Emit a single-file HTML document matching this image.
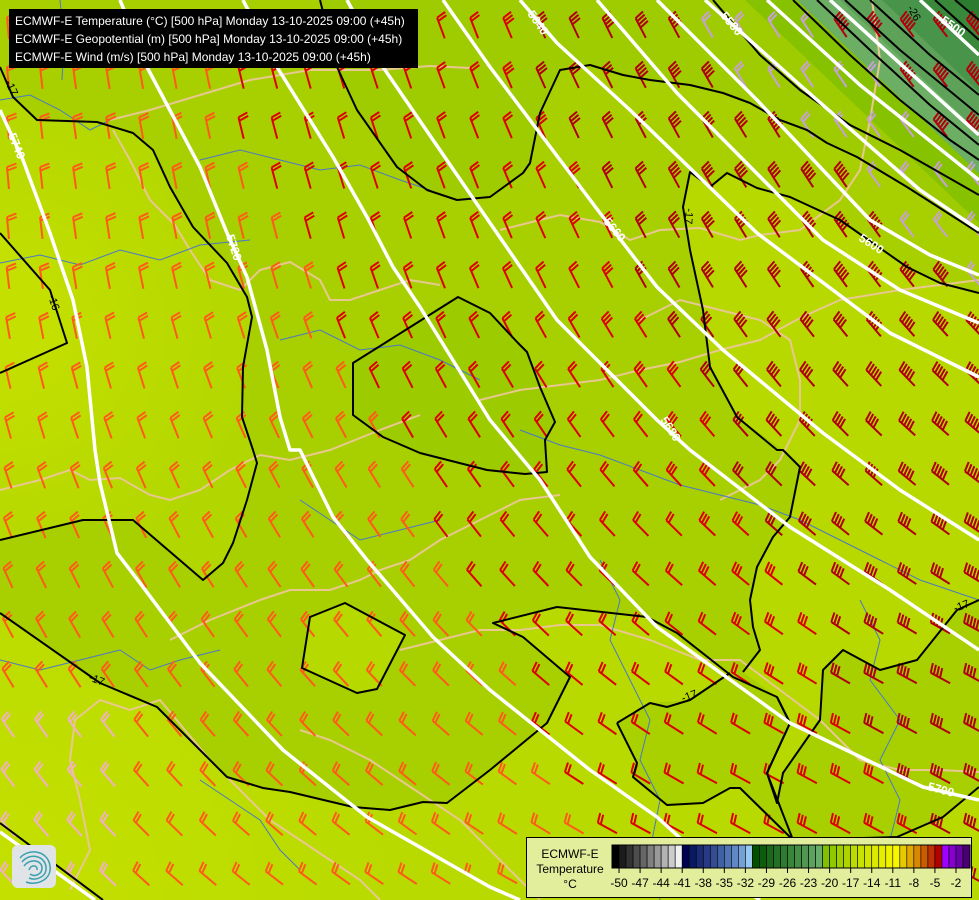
<!DOCTYPE html>
<html><head><meta charset="utf-8"><style>
html,body{margin:0;padding:0;width:979px;height:900px;overflow:hidden;background:#a8d000}
#m{position:absolute;left:0;top:0}
.t{position:absolute;left:9px;top:9px;width:409px;height:59px;background:#000;color:#fff;font:12px "Liberation Sans",sans-serif;line-height:18px;padding:3px 0 0 6px;box-sizing:border-box;white-space:nowrap}
.lg{position:absolute;left:526px;top:837px;width:446px;height:61px;background:#e2ee9c;border:1px solid #000;box-sizing:border-box;font:12px "Liberation Sans",sans-serif}
.lg .n{position:absolute;left:4px;top:9px;width:78px;text-align:center;line-height:15px;color:#000}
</style></head><body>
<svg id="m" width="979" height="900" viewBox="0 0 979 900" xmlns="http://www.w3.org/2000/svg">
<defs>
<radialGradient id="lc" cx="0" cy="330" r="260" gradientUnits="userSpaceOnUse"><stop offset="0" stop-color="#c6e000"/><stop offset="1" stop-color="#b2d700"/></radialGradient>
<radialGradient id="bc" cx="0" cy="900" r="420" gradientUnits="userSpaceOnUse"><stop offset="0" stop-color="#c4e000"/><stop offset="1" stop-color="#b8da00"/></radialGradient>
</defs>
<rect width="979" height="900" fill="#a8d000"/>
<!-- left lighter -->
<polygon fill="url(#lc)" points="0,67 13,97 37,120 97,122 133,133 153,150 170,187 193,227 227,263 247,297 252,317 243,367 242,417 253,450 257,463 247,500 233,543 223,563 203,580 133,520 83,520 0,540"/>
<polygon fill="#c4e000" points="0,233 50,290 67,343 0,373"/>
<!-- bottom lighter -->
<polygon fill="url(#bc)" points="0,613 100,683 157,707 227,777 263,788 290,792 353,807 390,810 423,802 447,803 490,770 547,723 570,677 523,637 493,623 557,607 647,617 733,677 790,723 767,773 793,840 897,837 943,817 979,787 979,900 0,900"/>
<polygon fill="#a9d100" points="617,723 650,703 690,700 730,673 777,697 790,723 767,773 793,840 740,788 730,788 703,803 667,805 633,777 637,763"/>
<polygon fill="#b6d900" points="310,617 345,603 405,635 377,689 357,693 302,668"/>
<!-- right-center lighter -->
<polygon fill="#b8d900" points="690,172 710,187 727,173 757,188 790,197 840,220 907,267 940,283 979,293 979,600 957,610 917,660 880,670 843,650 823,670 820,720 783,773 777,803 767,773 790,723 777,697 743,672 760,650 753,627 750,600 757,567 773,537 790,517 800,467 783,450 737,417 710,367 703,310 690,250 683,207"/>
<!-- upper darker -->
<polygon fill="#9fcc00" points="320,0 337,67 357,110 397,167 427,190 457,200 490,197 523,173 530,163 540,113 560,70 590,65 623,75 650,80 690,85 723,93 750,103 780,120 807,130 827,143 857,157 907,187 979,233 979,0"/>
<!-- central polygon -->
<polygon fill="#9ccb00" points="458,297 353,363 353,415 383,437 420,453 487,470 525,474 547,472 545,440 555,422 540,387 527,352 518,343 490,313"/>
<!-- top right bands -->
<g>
<polygon fill="#86c200" points="745,0 1795,1000 2000,1000 2000,0"/>
<polygon fill="#6caf64" points="797,0 1847,1000 2000,1000 2000,0"/>
<polygon fill="#5da258" points="840,0 1890,1000 2000,1000 2000,0"/>
<polygon fill="#48944a" points="882,0 1932,1000 2000,1000 2000,0"/>
<polygon fill="#3a883a" points="922,0 1972,1000 2000,1000 2000,0"/>
<polygon fill="#2c7c30" points="955,0 2005,1000 2100,1000 2100,0"/>
<polygon fill="#217127" points="985,0 2035,1000 2100,1000 2100,0"/>
</g>
<!-- borders (beige) -->
<g fill="none" stroke="#e8c890" stroke-width="2">
<polyline points="110,120 150,110 200,95 250,80 310,70 380,70 430,66 470,68"/>
<polyline points="113,130 130,160 150,200 175,225 190,250 210,280 240,290 260,270 290,262 320,280 330,300 350,300 380,290 410,280 440,285"/>
<polyline points="0,490 40,480 70,470 90,480 120,478 150,495 170,500 200,490 230,470 260,455 290,460 330,450 380,430 420,415"/>
<polyline points="500,230 540,220 560,215 600,222 630,240 660,230 700,228 740,240 760,235 800,230 840,200 860,170 870,120 880,60 872,0"/>
<polyline points="480,400 520,390 560,385 600,380 640,370 680,362 720,350 760,340 800,318 840,300 900,290 979,280"/>
<polyline points="640,320 680,300 720,310 760,320 790,340 800,380 800,420 780,460 760,480 740,490 720,500"/>
<polyline points="170,640 210,620 260,600 290,590 330,590 360,580 380,570 410,560 440,540 480,520 520,500 560,495"/>
<polyline points="70,890 90,850 80,800 70,760 75,720 100,700 130,710 160,700 185,730 210,760 240,790 270,820 300,840 330,860 360,880 380,900"/>
<polyline points="400,650 440,640 480,630 520,630 560,625 600,625 650,640 700,660 740,660 780,690 820,720 860,760 900,770 940,770 979,772"/>
<polyline points="300,730 330,740 370,760 400,780 430,800 460,820 490,850 520,880 540,900"/>
</g>
<!-- rivers -->
<g fill="none" stroke="#4a78c8" stroke-width="1">
<polyline points="0,100 30,95 60,110 90,130 110,120"/>
<polyline points="200,160 240,150 280,160 320,170 360,165 400,180 430,190"/>
<polyline points="0,263 40,255 80,265 120,250 160,260 200,245 250,240"/>
<polyline points="520,430 560,445 600,455 640,470 680,485 720,495 760,505 800,520 840,540 880,560 920,580 979,600"/>
<polyline points="280,340 320,330 360,350 400,345 440,360 480,380"/>
<polyline points="600,560 620,600 610,640 630,680 650,720 640,760 660,800 650,850 660,900"/>
<polyline points="0,660 40,670 80,660 120,650 150,670 180,660 220,650"/>
<polyline points="200,780 230,800 260,820 280,850 300,870"/>
<polyline points="860,600 880,640 870,680 900,720 880,760 900,800 890,840"/>
<polyline points="60,0 64,40 62,80"/>
<polyline points="300,500 330,520 360,540 400,530 440,520"/>
</g>
<!-- barbs -->
<g id="barbs" fill="none" stroke-width="2" stroke-linecap="butt"></g>
<!-- black temperature contours -->
<g fill="none" stroke="#000" stroke-width="2" stroke-linejoin="round">
<polyline points="0,67 13,97 37,120 97,122 133,133 153,150 170,187 193,227 227,263 247,297 252,317 243,367 242,417 253,450 257,463 247,500 233,543 223,563 203,580 133,520 83,520 0,540"/>
<polyline points="0,233 50,290 67,343 0,373"/>
<polyline points="0,613 100,683 157,707 227,777 263,788 290,792 353,807 390,810 423,802 447,803 490,770 547,723 570,677 523,637 493,623 557,607 647,617 677,633 733,677 777,697 790,723 767,773 793,840 897,837 943,817 979,787"/>
<polyline points="617,723 650,703 667,707 690,700 730,673"/>
<polyline points="617,723 637,763 633,777 667,805 703,803 730,788 740,788 793,840"/>
<polygon points="458,297 353,363 353,415 383,437 420,453 487,470 525,474 547,472 545,440 555,422 540,387 527,352 518,343 490,313"/>
<polygon points="310,617 345,603 405,635 377,689 357,693 302,668"/>
<polyline points="743,672 760,650 753,627 750,600 757,567 773,537 790,517 800,467 783,450 777,450 737,417 710,367 703,310 690,250 683,207 690,172 710,187 727,173 757,188 790,197 840,220 907,267 940,283 979,293"/>
<polyline points="777,697 790,723 767,773 777,803 783,773 820,720 823,670 843,650 880,670 917,660 957,610 979,600"/>
<polyline points="320,0 337,67 357,110 397,167 427,190 457,200 490,197 523,173 530,163 540,113 560,70 590,65 623,75 650,80 690,85 723,93 750,103 780,120 807,130 827,143 857,157 907,187 979,233"/>
<polyline points="713,0 760,55 800,90 850,125 900,150 979,195"/>
<polyline points="793,0 850,55 900,100 950,140 979,160"/>
<polyline points="817,0 870,50 930,105 979,145"/>
<polyline points="845,0 900,50 979,115"/>
<polyline points="870,0 930,55 979,95"/>
<polyline points="935,0 979,40"/>
<polyline points="955,0 979,20"/>
<polyline points="0,823 103,900"/>
</g>
<!-- white geopotential -->
<g fill="none" stroke="#fff" stroke-width="3.5" stroke-linejoin="round">
<polyline points="0,110 23,160 50,233 73,300 87,367 95,450 100,483 117,553 140,583 200,663 283,750 367,817 490,887 520,900"/>
<polyline points="0,832 95,900"/>
<polyline points="120,0 147,67 200,167 227,233 247,277 267,350 280,417 290,450 300,450 333,517 367,560 433,637 490,690 590,770 657,817 723,877 760,900"/>
<polyline points="243,0 277,67 333,157 367,217 393,267 420,307 490,420 540,480 590,557 657,627 790,723 923,787 979,800"/>
<polyline points="347,0 383,67 490,223 557,320 657,420 690,450 790,527 890,590 979,650"/>
<polyline points="443,0 490,67 600,213 657,287 723,350 823,433 900,490 979,540"/>
<polyline points="520,0 557,43 630,110 757,233 890,333 979,377"/>
<polyline points="597,0 677,93 823,240 900,290 979,323"/>
<polyline points="657,0 757,100 870,220 930,255 979,275"/>
<polyline points="705,0 800,85 920,190 979,230"/>
<polyline points="767,0 860,85 979,180"/>
<polyline points="830,0 979,135"/>
<polyline points="920,0 979,55"/>
</g>
<!-- labels -->
<g font-family="Liberation Sans,sans-serif" font-size="12" font-weight="bold" fill="#fff">
<text transform="translate(8,135) rotate(68)">5740</text>
<text transform="translate(226,236) rotate(72)">5720</text>
<text transform="translate(527,14) rotate(55)">5640</text>
<text transform="translate(720,16) rotate(50)">5580</text>
<text transform="translate(940,22) rotate(35)">5500</text>
<text transform="translate(603,222) rotate(50)">5660</text>
<text transform="translate(858,240) rotate(33)">5600</text>
<text transform="translate(660,420) rotate(57)">5680</text>
<text transform="translate(927,790) rotate(15)">5700</text>
</g>
<g font-family="Liberation Sans,sans-serif" font-size="11" fill="#000">
<text transform="translate(5,82) rotate(65)">-17</text>
<text transform="translate(48,296) rotate(72)">-16</text>
<text transform="translate(683,702) rotate(-20)">-17</text>
<text transform="translate(88,680) rotate(22)">-17</text>
<text transform="translate(686,208) rotate(95)">-17</text>
<text transform="translate(955,612) rotate(-20)">-17</text>
<text transform="translate(907,8) rotate(60)">-26</text>
</g>
<!-- logo -->
<rect x="12" y="845" width="44" height="43" rx="6" fill="#e0e4e6"/>
<g fill="none" stroke="#3aa0b0" stroke-width="1.5">
<path d="M20,858 C28,848 48,850 50,866 C52,880 36,886 26,882"/>
<path d="M22,862 C30,852 45,856 46,867 C47,877 36,881 29,878"/>
<path d="M24,866 C30,858 42,860 42,868 C42,875 34,877 30,874"/>
<path d="M29,870 C31,864 38,865 37,870"/>
</g>
</svg>
<div class="t">ECMWF-E Temperature (°C) [500 hPa] Monday 13-10-2025 09:00 (+45h)<br>ECMWF-E Geopotential (m) [500 hPa] Monday 13-10-2025 09:00 (+45h)<br>ECMWF-E Wind (m/s) [500 hPa] Monday 13-10-2025 09:00 (+45h)</div>
<div class="lg"><div class="n">ECMWF-E<br>Temperature<br>°C</div>
<svg width="446" height="61" style="position:absolute;left:-1px;top:-1px" xmlns="http://www.w3.org/2000/svg"><g id="cb"></g></svg>
</div>
<script>
(function(){
var ns="http://www.w3.org/2000/svg";
var cols=["#000000","#1c1c1c","#333333","#4d4d4d","#666666","#808080","#999999","#b3b3b3","#cccccc","#f0f0f0",
"#000050","#0a1a62","#1a2a74","#283a84","#344c94","#4060a4","#5074b4","#6088c4","#74a0d8","#98c8f2",
"#005000","#0c5c0c","#1a681a","#247024","#2e7a2e","#388438","#448e46","#509852","#5ca25e","#68ac6a",
"#80c000","#90c800","#a0cf00","#aed400","#bcdc00","#c8e200","#d4e600","#dcea00","#e6ee00","#f0f200",
"#f6f600","#e8c800","#e0a800","#d88800","#cc5a00","#c03000","#b40000","#a000ff","#8800d0","#6a00a8","#4a0070"];
var g=document.getElementById("cb"),x0=86,w=7.02,h="";
for(var i=0;i<51;i++){h+='<rect x="'+(x0+i*w).toFixed(2)+'" y="8" width="'+w.toFixed(2)+'" height="23" fill="'+cols[i]+'" stroke="#000" stroke-width="0.6"/>';}
h+='<rect x="'+x0+'" y="8" width="'+(51*w).toFixed(2)+'" height="23" fill="none" stroke="#000" stroke-width="1"/>';
for(var k=0;k<17;k++){var bx=x0+w*(1+3*k);h+='<line x1="'+bx+'" y1="31" x2="'+bx+'" y2="36" stroke="#000"/>';
h+='<text x="'+bx+'" y="50" font-family="Liberation Sans,sans-serif" font-size="12" text-anchor="middle">'+(-50+3*k)+'</text>';}
g.innerHTML=h;
var b=document.getElementById("barbs"),s="";
for(var r=0;r<18;r++){var y=28+r*50;for(var c=0;c<31;c++){var x=8+c*33.3;
 var a=-(5+0.035*x+0.06*Math.max(0,y-250));if(a<-62)a=-62;
 var ar=a*Math.PI/180,dx=Math.sin(ar),dy=-Math.cos(ar),L=22;
 var fa=(a+75)*Math.PI/180,fx=Math.sin(fa),fy=-Math.cos(fa);
 var n=2+Math.floor(Math.max(0,x-0.4*y-350)/120);if(n>5)n=5;
 var cv=x-0.5*y,col=cv<170?"#ff5a1a":(cv<500?"#dd0000":"#b00010");
 var q=x-1.05*y;if(y<380&&q>655&&q<800){col="#c8a0d8";n=2;}
 if(x<130&&y>700)col="#f2b0c4";
 var tx=x+dx*L/2,ty=y+dy*L/2,bx2=x-dx*L/2,by2=y-dy*L/2;
 var d="M"+bx2.toFixed(1)+","+by2.toFixed(1)+"L"+tx.toFixed(1)+","+ty.toFixed(1);
 for(var i=0;i<n;i++){var px=tx-dx*i*3.5,py=ty-dy*i*3.5;d+="M"+px.toFixed(1)+","+py.toFixed(1)+"l"+(fx*10).toFixed(1)+","+(fy*10).toFixed(1);}
 s+='<path d="'+d+'" stroke="'+col+'"/>';}}
b.innerHTML=s;
})();
</script>
</body></html>
